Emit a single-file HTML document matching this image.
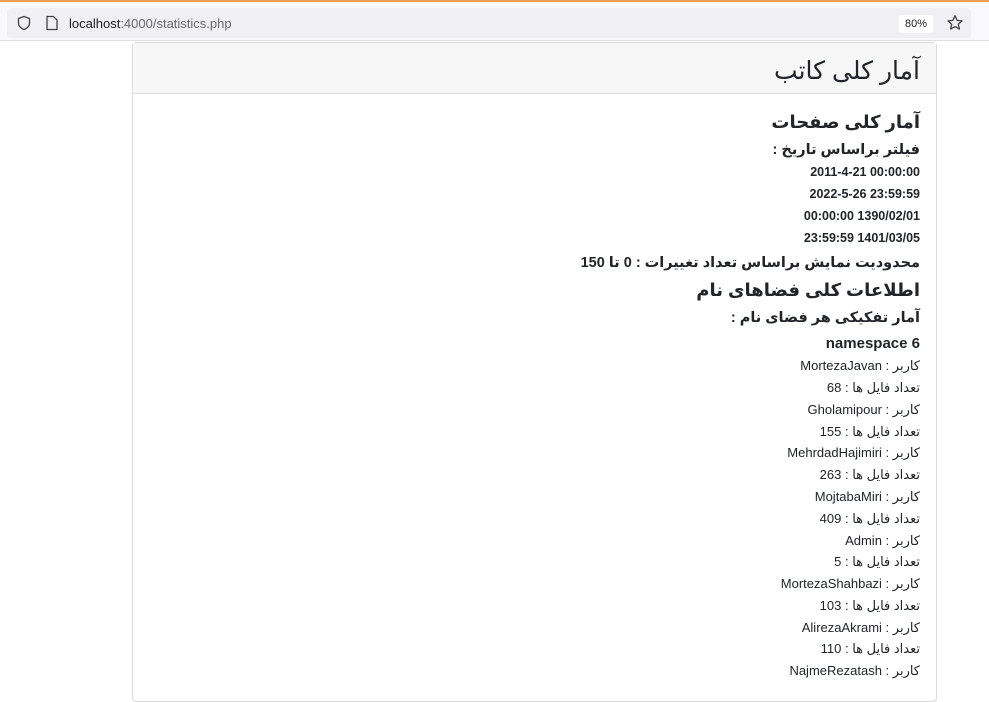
<!DOCTYPE html>
<html><head><meta charset="utf-8"><style>
body{margin:0;width:989px;height:682px;overflow:hidden;background:#fff;font-family:"Liberation Sans","DejaVu Sans",sans-serif;position:relative}
.top{position:absolute;left:0;top:0;width:989px;height:41px;background:#f9f9fb;border-top:2px solid #f0a050;box-sizing:border-box;border-bottom:1px solid #e0e0e4}
.url{position:absolute;left:7px;top:6px;width:964px;height:30px;background:#f0f0f4;border-radius:4px}
.card{position:absolute;left:132px;top:42px;width:805px;height:660px;border:1px solid #dcdcdc;border-radius:4px;box-sizing:border-box}
.hd{position:absolute;left:0;top:0;right:0;height:50px;background:#f7f7f7;border-bottom:1px solid #dcdcdc}
.l{position:absolute;right:69px;white-space:nowrap;direction:rtl;color:#212529;font-family:"Liberation Sans","DejaVu Sans",sans-serif;line-height:1}
.b{font-weight:bold}
</style></head><body>
<div class="top"><div class="url">
<svg style="position:absolute;left:9px;top:7px" width="16" height="16" viewBox="0 0 16 16"><path d="M8 1.5 L13.5 3.5 V8 C13.5 11 11 13.5 8 14.5 C5 13.5 2.5 11 2.5 8 V3.5 Z" fill="none" stroke="#444" stroke-width="1.3"/></svg>
<svg style="position:absolute;left:38px;top:7px" width="14" height="16" viewBox="0 0 14 16"><path d="M2 1.5 H8.5 L12 5 V14.5 H2 Z" fill="none" stroke="#444" stroke-width="1.3"/></svg>
<span style="position:absolute;left:62px;top:8px;font-size:13px;color:#1a1a1a">localhost<span style="color:#6a6a6a">:4000/statistics.php</span></span>
<span style="position:absolute;left:892px;top:7px;width:34px;height:18px;background:#fff;border-radius:3px;font-size:11px;color:#222;text-align:center;line-height:18px">80%</span>
<svg style="position:absolute;left:939px;top:6px" width="18" height="18" viewBox="0 0 18 18"><path d="M9 1.8 L11.1 6.4 L16 6.9 L12.3 10.2 L13.4 15.1 L9 12.6 L4.6 15.1 L5.7 10.2 L2 6.9 L6.9 6.4 Z" fill="none" stroke="#444" stroke-width="1.3" stroke-linejoin="round"/></svg>
</div></div>
<div class="card"><div class="hd"></div></div>
<div class="l" style="top:59px;font-size:25px">آمار کلی کاتب</div>
<div class="l b" style="top:113px;font-size:18px">آمار کلی صفحات</div>
<div class="l b" style="top:143px;font-size:14.5px">فیلتر براساس تاریخ :</div>
<div class="l b" style="top:166px;font-size:12.5px"><span dir="ltr">2011-4-21 00:00:00</span></div>
<div class="l b" style="top:188px;font-size:12.5px"><span dir="ltr">2022-5-26 23:59:59</span></div>
<div class="l b" style="top:210px;font-size:12.5px"><span dir="ltr">00:00:00 1390/02/01</span></div>
<div class="l b" style="top:232px;font-size:12.5px"><span dir="ltr">23:59:59 1401/03/05</span></div>
<div class="l b" style="top:256px;font-size:14.5px">محدودیت نمایش براساس تعداد تغییرات : 0 تا 150</div>
<div class="l b" style="top:281px;font-size:18px">اطلاعات کلی فضاهای نام</div>
<div class="l b" style="top:311px;font-size:14.5px">آمار تفکیکی هر فضای نام :</div>
<div class="l b" style="top:336px;font-size:15px"><span dir="ltr">namespace 6</span></div>
<div class="l" style="top:359px;font-size:13px">کاربر : MortezaJavan</div>
<div class="l" style="top:381px;font-size:13px">تعداد فایل ها : 68</div>
<div class="l" style="top:403px;font-size:13px">کاربر : Gholamipour</div>
<div class="l" style="top:425px;font-size:13px">تعداد فایل ها : 155</div>
<div class="l" style="top:446px;font-size:13px">کاربر : MehrdadHajimiri</div>
<div class="l" style="top:468px;font-size:13px">تعداد فایل ها : 263</div>
<div class="l" style="top:490px;font-size:13px">کاربر : MojtabaMiri</div>
<div class="l" style="top:512px;font-size:13px">تعداد فایل ها : 409</div>
<div class="l" style="top:534px;font-size:13px">کاربر : Admin</div>
<div class="l" style="top:555px;font-size:13px">تعداد فایل ها : 5</div>
<div class="l" style="top:577px;font-size:13px">کاربر : MortezaShahbazi</div>
<div class="l" style="top:599px;font-size:13px">تعداد فایل ها : 103</div>
<div class="l" style="top:621px;font-size:13px">کاربر : AlirezaAkrami</div>
<div class="l" style="top:642px;font-size:13px">تعداد فایل ها : 110</div>
<div class="l" style="top:664px;font-size:13px">کاربر : NajmeRezatash</div>
</body></html>
